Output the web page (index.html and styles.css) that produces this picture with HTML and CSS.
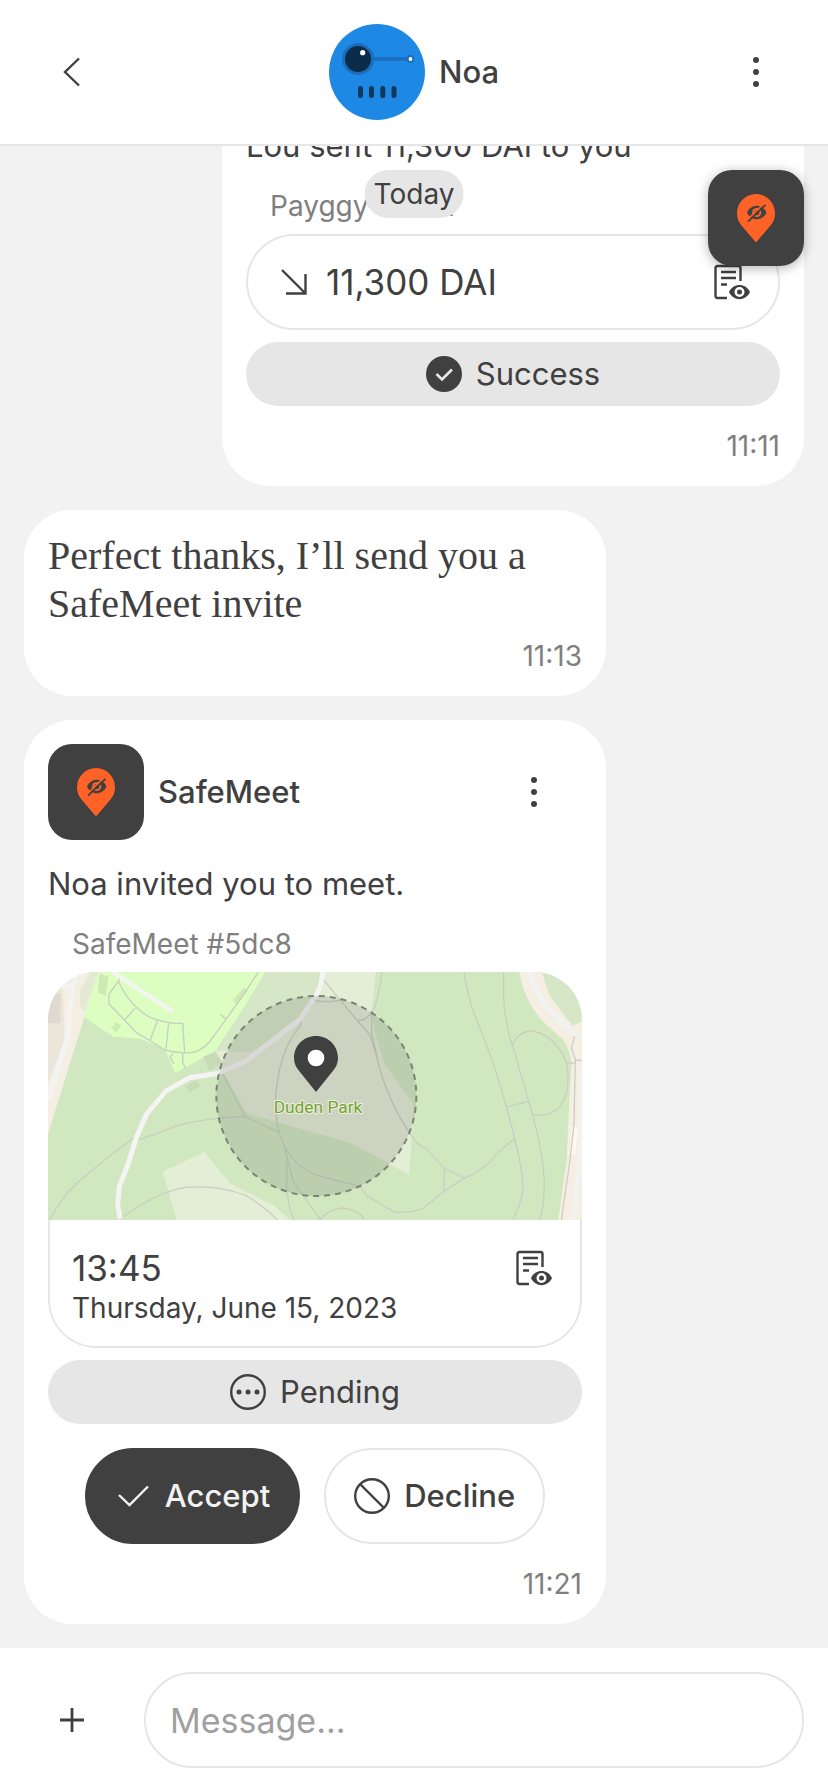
FILE: index.html
```html
<!DOCTYPE html>
<html lang="en">
<head>
<meta charset="utf-8">
<meta name="viewport" content="width=device-width, initial-scale=1">
<title>Noa</title>
<link rel="stylesheet" href="styles.css">
</head>
<body>
<svg class="defs" aria-hidden="true">
  <symbol id="dots" viewBox="0 0 36 36">
    <circle cx="18" cy="6" r="3"/><circle cx="18" cy="18" r="3"/><circle cx="18" cy="30" r="3"/>
  </symbol>
  <symbol id="doc-eye" viewBox="0 0 36 36">
    <path d="M13 34H3.500Q1.500 34 1.500 32V4Q1.500 2 3.500 2H24.500Q26.500 2 26.500 4V17" fill="none" stroke="currentColor" stroke-width="2.400"/>
    <path d="M7 8H22M7 14H22M7 20.500H13" fill="none" stroke="currentColor" stroke-width="2.400"/>
    <path fill-rule="evenodd" d="M15 28C19 18.500 32 18.500 36 28C32 37.500 19 37.500 15 28ZM25.500 23A5 5 0 1 0 25.500 33A5 5 0 1 0 25.500 23Z" fill="currentColor"/>
    <circle cx="25.500" cy="28" r="2.500" fill="currentColor"/>
  </symbol>
  <symbol id="safemeet" viewBox="0 0 96 96">
    <path d="M48 72.500L33.500 55.500C30.500 52 29 48 29 43.500C29 32.500 37.500 24 48 24S67 32.500 67 43.500C67 48 65.500 52 62.500 55.500Z" fill="#ff6227"/>
    <path d="M39 42.500C43 33.500 54.500 33.500 58.500 42.500C54.500 51.500 43 51.500 39 42.500Z" fill="#404040"/>
    <circle cx="48.700" cy="42.500" r="4.600" fill="#ff6227"/>
    <circle cx="48.700" cy="42.500" r="2.600" fill="#404040"/>
    <path d="M38.800 50.300L56 33.500" stroke="#ff6227" stroke-width="1.600"/>
    <path d="M40 51.700L57.500 34.800" stroke="#404040" stroke-width="1.800"/>
  </symbol>
</svg>

<div class="app">
  <header class="topbar">
    <button class="icon-btn" type="button" aria-label="Back">
      <svg class="icon" viewBox="0 0 36 36"><path d="M25 4.500L11 18L25 31.500" fill="none" stroke="currentColor" stroke-width="2.400"/></svg>
    </button>
    <div class="contact">
      <svg class="avatar" viewBox="0 0 96 96" role="img" aria-label="Noa's avatar">
        <circle cx="48" cy="48" r="48" fill="#1e88e5"/>
        <path d="M40 35H80" stroke="#1a6eba" stroke-width="3.400"/>
        <circle cx="29" cy="35" r="16" fill="#1a6eba"/>
        <circle cx="29" cy="35" r="13" fill="#0b2c49"/>
        <circle cx="33.700" cy="28.700" r="2.600" fill="#fff"/>
        <circle cx="81.500" cy="35" r="4" fill="#1a6eba"/>
        <circle cx="81.500" cy="35" r="1.900" fill="#fff"/>
        <path d="M31.500 64.500V71.500M42.500 64.500V71.500M53.800 64.500V71.500M65 64.500V71.500" stroke="#10375c" stroke-width="5" stroke-linecap="round"/>
      </svg>
      <h1 class="title">Noa</h1>
    </div>
    <button class="icon-btn" type="button" aria-label="More options">
      <svg class="icon" fill="currentColor"><use href="#dots"/></svg>
    </button>
  </header>

  <main class="chat">
    <article class="bubble bubble-out">
      <p class="lead">Lou sent 11,300 DAI to you</p>
      <p class="label">Payggy #bf6a</p>
      <div class="amount">
        <svg class="icon" viewBox="0 0 36 36"><path d="M1 1L24 24M5 24.500H24.500V5" transform="translate(5 5)" fill="none" stroke="currentColor" stroke-width="2.400"/></svg>
        <span class="value">11,300 DAI</span>
        <button class="plain-btn" type="button" aria-label="View details"><svg class="icon"><use href="#doc-eye"/></svg></button>
      </div>
      <div class="status">
        <svg class="icon" viewBox="0 0 36 36"><circle cx="18" cy="18" r="18" fill="#404040"/><path d="M10.500 18L16 23.500L26 13.500" fill="none" stroke="#e6e6e6" stroke-width="2.600"/></svg>
        <span>Success</span>
      </div>
      <time class="time">11:11</time>
    </article>

    <article class="bubble bubble-text">
      <p class="message">Perfect thanks, I’ll send you a SafeMeet invite</p>
      <time class="time">11:13</time>
    </article>

    <article class="bubble">
      <header class="bubble-head">
        <svg class="app-icon"><use href="#safemeet"/></svg>
        <h2 class="title">SafeMeet</h2>
        <button class="icon-btn" type="button" aria-label="SafeMeet options">
          <svg class="icon" fill="currentColor"><use href="#dots"/></svg>
        </button>
      </header>
      <p class="lead">Noa invited you to meet.</p>
      <p class="label">SafeMeet #5dc8</p>
      <section class="meeting">
        <svg class="map" viewBox="0 0 1602 744" preserveAspectRatio="xMidYMid slice" role="img" aria-label="Map of Duden Park">
          <rect width="1602" height="744" fill="#d1e7c0"/>
          <g transform="translate(-24 -36)" fill="none" stroke-linejoin="round">
            <path d="M24 36H175L133 172L24 522Z" fill="#f5efe3"/>
            <path d="M24 70L68 82L75 240L24 370Z" fill="#ece6da"/>
            <path d="M24 104L62 100V190H24Z" fill="#dfdad0"/>
            <path d="M150 36H175L133 155L120 140V95Z" fill="#e2ead2"/>
            <path d="M175 36H677L620 130L527 272L405 340L375 268L300 236L220 230L133 172Z" fill="#dcfec1"/>
            <path d="M677 36H860L780 180L615 300L527 272L620 130Z" fill="#d6e7c8"/>
            <path d="M527 272L635 276L780 180L840 80L850 36H1008L995 150L1003 210L1035 315L1120 430L1108 645L935 550L840 523L620 460L545 330Z" fill="#e4edd6"/>
            <path d="M368 635L493 576L570 670L700 735L750 780H410Z" fill="#e4edd6"/>
            <path d="M178 40L206 50L196 108L174 98ZM215 203L230 186L244 198L228 217ZM578 122L612 82L622 92L588 130Z" fill="#cdeab4"/>
            <path d="M490 290L527 275L548 308L508 332ZM437 380L468 360L482 376L450 398Z" fill="#c6dbb6"/>
            <g stroke="#c8cfc2" stroke-width="4">
              <path d="M243 52L207 103V132L290 218L375 270Q430 285 470 274Q495 262 508 246L558 178L620 90L655 36M235 64Q270 140 330 172Q380 192 428 190L434 278M285 145L252 182M352 182L330 242M386 190L378 266M540 162L560 178M428 278V308L436 324M400 280L390 292L402 312"/>
              <path d="M30 780Q62 715 110 670Q190 600 275 538H300Q350 522 405 499Q490 474 615 470L545 335M615 470L717 517L732 555Q770 630 840 648L960 680L980 707L1063 756Q1110 760 1150 745L1212 694L1274 653M717 517Q700 440 710 380Q725 260 780 200L785 175M732 555L760 665L842 780M740 600V690L750 750L762 780"/>
              <path d="M240 778Q340 700 435 682Q540 674 620 708Q680 745 712 780M838 780Q870 745 910 744Q955 750 975 780"/>
              <path d="M846 54L950 180L990 225L1010 290Q1040 420 1110 520Q1130 555 1160 566L1213 626L1275 654Q1320 635 1350 605Q1390 560 1424 537M1213 626L1211 695M818 120Q860 130 902 120M950 180Q975 185 992 160L1005 140Q1018 95 1026 36M995 150V220L1012 292"/>
              <path d="M1272 36Q1285 120 1310 180Q1380 350 1424 537Q1450 640 1449 690Q1440 740 1418 780M1391 36V120Q1400 220 1425 280L1466 424Q1510 570 1513 670Q1512 740 1500 780M1400 441L1466 424M1417 260Q1430 213 1480 213Q1550 230 1580 310Q1595 390 1560 440Q1520 475 1480 463"/>
            </g>
            <path d="M1438 36H1626V780H1555L1580 600L1588 420L1595 310Q1590 270 1570 240L1510 185Q1450 120 1438 36Z" fill="#f5efe3"/>
            <path d="M1505 36H1626V182L1598 198L1530 110Z" fill="#d6e7c8"/>
            <path d="M1594 500H1614L1606 586L1591 582Z" fill="#fdf9ee"/>
            <path d="M1604 228L1594 265L1606 298L1602 490L1590 600L1564 780M1578 309H1604M1604 301H1626" stroke="#cfcbc6" stroke-width="4"/>
            <path d="M1470 36Q1478 90 1530 150Q1570 200 1626 232M1622 330V560L1602 780" stroke="#f3f2f3" stroke-width="15"/>
            <path d="M115 36Q98 70 95 90L88 180L80 240L24 420M24 72L95 82" stroke="#f4f3f3" stroke-width="15"/>
            <path d="M218 36L400 156" stroke="#f4f4f2" stroke-width="13"/>
            <path d="M241 776L233 737L238 680L265 610L290 530L320 462L378 393L450 353L535 340L615 305L780 178L825 110Q846 80 848 36" stroke="#f4f4f3" stroke-width="15"/>
            <circle cx="829" cy="408" r="300" fill="#404040" fill-opacity=".15"/>
            <circle cx="829" cy="408" r="300" stroke="#7b8476" stroke-width="6" stroke-dasharray="18 15"/>
            <text class="map-label" x="834" y="458" text-anchor="middle">Duden Park</text>
            <path d="M828 396L778 334C767 321 762 309 762 294C762 257 791 228 828 228S894 257 894 294C894 309 889 321 878 334Z" fill="#404040"/>
            <circle cx="828" cy="294" r="25" fill="#fff"/>
          </g>
        </svg>
        <div class="meeting-info">
          <div class="when">
            <p class="value">13:45</p>
            <p class="date">Thursday, June 15, 2023</p>
          </div>
          <button class="plain-btn" type="button" aria-label="View details"><svg class="icon"><use href="#doc-eye"/></svg></button>
        </div>
      </section>
      <div class="status">
        <svg class="icon" viewBox="0 0 36 36"><circle cx="18" cy="18" r="16.800" fill="none" stroke="currentColor" stroke-width="2.400"/><g fill="currentColor"><circle cx="9" cy="18" r="2.500"/><circle cx="18" cy="18" r="2.500"/><circle cx="27" cy="18" r="2.500"/></g></svg>
        <span>Pending</span>
      </div>
      <div class="actions">
        <button class="btn btn-dark" type="button">
          <svg class="icon" viewBox="0 0 36 36"><path d="M4 17L14.500 27L33 8.500" fill="none" stroke="currentColor" stroke-width="2.400"/></svg>
          Accept
        </button>
        <button class="btn" type="button">
          <svg class="icon" viewBox="0 0 36 36"><g fill="none" stroke="currentColor" stroke-width="2.400"><circle cx="18" cy="18" r="16.800"/><path d="M6.500 6.500L29.500 29.500"/></g></svg>
          Decline
        </button>
      </div>
      <time class="time">11:21</time>
    </article>

    <span class="day">Today</span>
    <button class="floating" type="button" aria-label="Open SafeMeet"><svg class="app-icon"><use href="#safemeet"/></svg></button>
  </main>

  <form class="composer">
    <button class="icon-btn" type="button" aria-label="Add">
      <svg class="icon" viewBox="0 0 36 36"><path d="M6 18H30M18 6V30" stroke="currentColor" stroke-width="2.800"/></svg>
    </button>
    <input class="field" type="text" aria-label="Message" placeholder="Message...">
  </form>
</div>
</body>
</html>
```

FILE: styles.css
```css
* { box-sizing: border-box; margin: 0; }

body {
  background: #f2f2f2;
  color: #404040;
  font-family: Inter, "Liberation Sans", sans-serif;
  font-size: 31px;
  line-height: 48px;
}

button, input { font: inherit; color: inherit; }

button {
  padding: 0;
  border: 0;
  background: none;
  cursor: pointer;
}

svg { display: block; flex: none; }

.defs { position: absolute; width: 0; height: 0; }

.app {
  display: flex;
  flex-direction: column;
  height: 100vh;
}

.icon { width: 36px; height: 36px; }

.icon-btn {
  display: grid;
  place-items: center;
  width: 96px;
  height: 96px;
  flex: none;
}

.plain-btn { margin-left: auto; }

.title { font-size: 31px; font-weight: 500; }

.topbar {
  display: flex;
  justify-content: space-between;
  align-items: center;
  padding: 24px;
  background: #fff;
  border-bottom: 2px solid #e6e6e6;
}

.contact {
  display: flex;
  align-items: center;
  gap: 14px;
}

.avatar { width: 96px; height: 96px; }

.chat {
  position: relative;
  flex: 1;
  min-height: 0;
  display: flex;
  flex-direction: column;
  justify-content: flex-end;
  gap: 24px;
  padding: 24px;
  overflow: hidden;
}

.bubble {
  display: flex;
  flex-direction: column;
  flex: none;
  margin-right: 198px;
  padding: 24px 24px 20px;
  border-radius: 48px;
  background: #fff;
}

.bubble-out {
  margin-right: 0;
  margin-left: 198px;
  padding-top: 144px;
}

.bubble-text { padding-top: 22px; }

.bubble-head {
  display: flex;
  align-items: center;
  gap: 14px;
  margin-bottom: 20px;
}

.bubble-head .icon-btn { margin-left: auto; }

.app-icon {
  width: 96px;
  height: 96px;
  border-radius: 24px;
  background: #404040;
}

.label {
  margin: 16px 24px 8px;
  color: #7f7f7f;
  font-size: 28px;
  line-height: 40px;
}

.amount {
  display: flex;
  align-items: center;
  gap: 14px;
  height: 96px;
  padding: 0 28px;
  border: 2px solid #e6e6e6;
  border-radius: 48px;
}

.value { font-size: 35px; }

.status {
  display: flex;
  justify-content: center;
  align-items: center;
  gap: 14px;
  height: 64px;
  margin-top: 12px;
  border-radius: 32px;
  background: #e6e6e6;
}

.time {
  align-self: flex-end;
  margin-top: 20px;
  color: #7f7f7f;
  font-size: 28px;
  line-height: 40px;
}

.message {
  font-family: "Liberation Serif", serif;
  font-size: 40px;
}

.bubble-text .time { margin-top: 8px; }

.meeting {
  border-radius: 48px;
  overflow: hidden;
}

.map { width: 100%; height: 248px; }

.map-label {
  font-family: Roboto, sans-serif;
  font-size: 52px;
  fill: #76a22d;
  stroke: #edf0e4;
  stroke-width: 6px;
  paint-order: stroke;
}

.meeting-info {
  display: flex;
  align-items: flex-start;
  padding: 24px 28px 22px 22px;
  border: 2px solid #e6e6e6;
  border-top: 0;
  border-radius: 0 0 48px 48px;
}

.meeting-info .plain-btn { margin-top: 6px; }

.date { font-size: 28px; line-height: 32px; }

.actions {
  display: flex;
  justify-content: center;
  gap: 24px;
  margin-top: 24px;
}

.btn {
  display: flex;
  align-items: center;
  gap: 14px;
  height: 96px;
  padding: 0 28px;
  border: 2px solid #e6e6e6;
  border-radius: 48px;
  font-weight: 500;
}

.btn-dark {
  border-color: #404040;
  background: #404040;
  color: #f2f2f2;
}

.day {
  position: absolute;
  top: 24px;
  left: 50%;
  transform: translateX(-50%);
  padding: 0 9px;
  border-radius: 24px;
  background: #e6e6e6;
  font-size: 28px;
}

.floating {
  position: absolute;
  top: 24px;
  right: 24px;
  border-radius: 24px;
  box-shadow: 0 2px 12px rgba(0, 0, 0, .3);
}

.composer {
  display: flex;
  align-items: center;
  gap: 24px;
  padding: 24px;
  background: #fff;
}

.field {
  flex: 1;
  min-width: 0;
  height: 96px;
  padding: 0 24px;
  border: 2px solid #e6e6e6;
  border-radius: 48px;
  background: #fff;
  font-size: 34px;
  outline: 0;
}

.field::placeholder { color: #9f9f9f; opacity: 1; }
```
